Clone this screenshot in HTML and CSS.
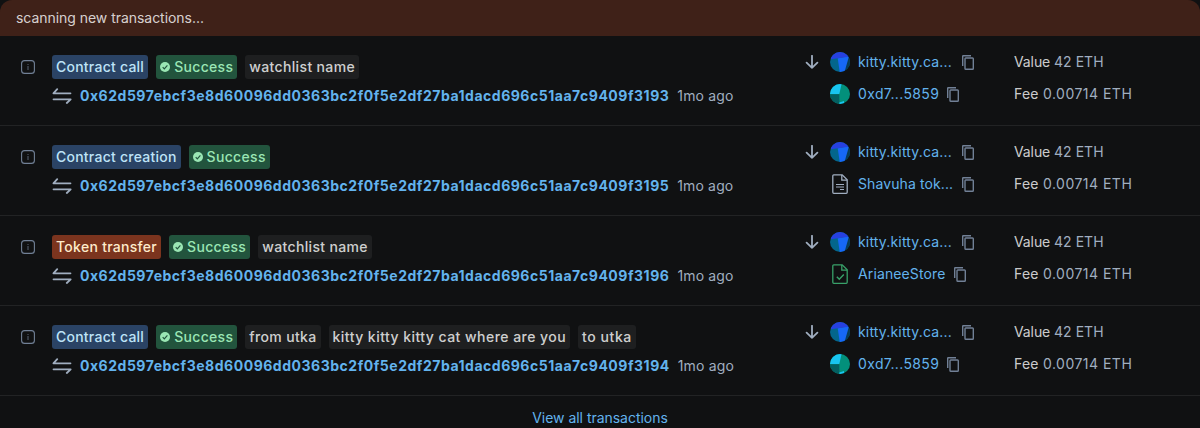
FILE: index.html
```
<!DOCTYPE html>
<html lang="en">
<head>
<meta charset="utf-8">
<title>Latest transactions</title>
<link rel="stylesheet" href="styles.css">
</head>
<body>
<svg class="sprite" aria-hidden="true">
  <symbol id="info" viewBox="0 0 14 14"><rect x=".6" y=".6" width="12.8" height="12.8" rx="3" fill="none" stroke="currentColor" stroke-width="1.1"/><path d="M6.5 4h1v1h-1zM6.5 6h1v4h-1z" fill="currentColor" opacity=".75"/></symbol>
  <symbol id="check" viewBox="0 0 10 10"><circle cx="5" cy="5" r="5" fill="currentColor"/><path d="M2.7 5.2 4.3 6.8 7.4 3.4" fill="none" stroke="#22543d" stroke-width="1.2"/></symbol>
  <symbol id="swap" viewBox="0 0 20 16"><path d="M18.5 5.3H1.4L5.2 1.2M1.5 11.3h17.2l-3.9 3.7" fill="none" stroke="currentColor" stroke-width="1.8" stroke-linecap="round" stroke-linejoin="round"/></symbol>
  <symbol id="down" viewBox="0 0 14 14"><path d="M7 .8v12M1.6 7.6 7 12.8l5.4-5.2" fill="none" stroke="currentColor" stroke-width="1.8" stroke-linecap="round" stroke-linejoin="round"/></symbol>
  <symbol id="copy" viewBox="0 0 12 15"><path d="M.7 11V1.3Q.7.7 1.3.7H9" fill="none" stroke="currentColor" stroke-width="1.4"/><rect x="3" y="3" width="8.3" height="11.2" rx=".8" fill="none" stroke="currentColor" stroke-width="1.4"/></symbol>
  <symbol id="kitty" viewBox="0 0 20 20"><path d="M0 0h20v20H0z" fill="#03668c"/><path d="M15 0h5v20h-7z" fill="#073c58"/><path d="M7.7 6.2 19 4.3 14.5 20H9.7z" fill="#1668f5"/><path d="M0 0h20v4.5L1 7.3z" fill="#2740e0"/></symbol>
  <symbol id="wallet" viewBox="0 0 20 20"><path d="M0 0h20v20H0z" fill="#03907b"/><path d="M0 0h11.6L9.3 10H0z" fill="#18c4f0"/><path d="M0 10.3h9.3l.1 9.7H0z" fill="#045f61"/><path d="M9.3 18.4 14 17v3H9.3z" fill="#18c4f0"/></symbol>
  <symbol id="doc" viewBox="0 0 16 20"><path d="M1.8.8h8.4l5 5v12.5q0 1-1 1H1.8q-1 0-1-1V1.8q0-1 1-1z" fill="none" stroke="currentColor" stroke-width="1.3"/><path d="M9.8 1v5.1H15" fill="none" stroke="currentColor" stroke-width="1.3"/><path d="M4 10.5h8M4 13h8M8 15.5h4" stroke="currentColor" stroke-width="1.2"/></symbol>
  <symbol id="verified" viewBox="0 0 16 20"><path d="M1.8.8h8.4l5 5v12.5q0 1-1 1H1.8q-1 0-1-1V1.8q0-1 1-1z" fill="none" stroke="currentColor" stroke-width="1.3"/><path d="M9.8 1v5.1H15" fill="none" stroke="currentColor" stroke-width="1.3"/><path d="m4.8 12.7 2.5 2.6 4.5-4.8" fill="none" stroke="currentColor" stroke-width="1.4"/></symbol>
</svg>
<main class="list">
  <div class="notice">scanning new transactions...</div>

  <section class="tx">
    <svg class="info"><use href="#info"/></svg>
    <div class="summary">
      <div class="tags"><span class="tag blue">Contract call</span><span class="tag green"><svg class="check"><use href="#check"/></svg>Success</span><span class="tag">watchlist name</span></div>
      <div class="hash-line"><svg class="swap"><use href="#swap"/></svg><a class="hash">0x62d597ebcf3e8d60096dd0363bc2f0f5e2df27ba1dacd696c51aa7c9409f3193</a><span class="time">1mo ago</span></div>
    </div>
    <svg class="down"><use href="#down"/></svg>
    <div class="parties">
      <div class="party"><svg class="avatar"><use href="#kitty"/></svg><a class="cut">kitty.kitty.ca...</a><svg class="copy"><use href="#copy"/></svg></div>
      <div class="party"><svg class="avatar"><use href="#wallet"/></svg><a class="address">0xd7...5859</a><svg class="copy"><use href="#copy"/></svg></div>
    </div>
    <div class="amounts"><div class="value">Value <span>42 ETH</span></div><div class="fee">Fee <span>0.00714 ETH</span></div></div>
  </section>

  <section class="tx">
    <svg class="info"><use href="#info"/></svg>
    <div class="summary">
      <div class="tags"><span class="tag blue">Contract creation</span><span class="tag green"><svg class="check"><use href="#check"/></svg>Success</span></div>
      <div class="hash-line"><svg class="swap"><use href="#swap"/></svg><a class="hash">0x62d597ebcf3e8d60096dd0363bc2f0f5e2df27ba1dacd696c51aa7c9409f3195</a><span class="time">1mo ago</span></div>
    </div>
    <svg class="down"><use href="#down"/></svg>
    <div class="parties">
      <div class="party"><svg class="avatar"><use href="#kitty"/></svg><a class="cut">kitty.kitty.ca...</a><svg class="copy"><use href="#copy"/></svg></div>
      <div class="party"><svg class="contract"><use href="#doc"/></svg><a class="cut token">Shavuha tok...</a><svg class="copy"><use href="#copy"/></svg></div>
    </div>
    <div class="amounts"><div class="value">Value <span>42 ETH</span></div><div class="fee">Fee <span>0.00714 ETH</span></div></div>
  </section>

  <section class="tx">
    <svg class="info"><use href="#info"/></svg>
    <div class="summary">
      <div class="tags"><span class="tag orange">Token transfer</span><span class="tag green"><svg class="check"><use href="#check"/></svg>Success</span><span class="tag">watchlist name</span></div>
      <div class="hash-line"><svg class="swap"><use href="#swap"/></svg><a class="hash">0x62d597ebcf3e8d60096dd0363bc2f0f5e2df27ba1dacd696c51aa7c9409f3196</a><span class="time">1mo ago</span></div>
    </div>
    <svg class="down"><use href="#down"/></svg>
    <div class="parties">
      <div class="party"><svg class="avatar"><use href="#kitty"/></svg><a class="cut">kitty.kitty.ca...</a><svg class="copy"><use href="#copy"/></svg></div>
      <div class="party"><svg class="contract ok"><use href="#verified"/></svg><a class="store">ArianeeStore</a><svg class="copy"><use href="#copy"/></svg></div>
    </div>
    <div class="amounts"><div class="value">Value <span>42 ETH</span></div><div class="fee">Fee <span>0.00714 ETH</span></div></div>
  </section>

  <section class="tx">
    <svg class="info"><use href="#info"/></svg>
    <div class="summary">
      <div class="tags"><span class="tag blue">Contract call</span><span class="tag green"><svg class="check"><use href="#check"/></svg>Success</span><span class="tag">from utka</span><span class="tag long">kitty kitty kitty cat where are you</span><span class="tag short">to utka</span></div>
      <div class="hash-line"><svg class="swap"><use href="#swap"/></svg><a class="hash">0x62d597ebcf3e8d60096dd0363bc2f0f5e2df27ba1dacd696c51aa7c9409f3194</a><span class="time">1mo ago</span></div>
    </div>
    <svg class="down"><use href="#down"/></svg>
    <div class="parties">
      <div class="party"><svg class="avatar"><use href="#kitty"/></svg><a class="cut">kitty.kitty.ca...</a><svg class="copy"><use href="#copy"/></svg></div>
      <div class="party"><svg class="avatar"><use href="#wallet"/></svg><a class="address">0xd7...5859</a><svg class="copy"><use href="#copy"/></svg></div>
    </div>
    <div class="amounts"><div class="value">Value <span>42 ETH</span></div><div class="fee">Fee <span>0.00714 ETH</span></div></div>
  </section>

  <a class="all">View all transactions</a>
</main>
</body>
</html>
```

FILE: styles.css
```
* { box-sizing: border-box; }
html { background: #101112; }
body {
  margin: 0;
  height: 428px;
  overflow: hidden;
  background: #101112;
  color: rgba(255, 255, 255, .8);
  font: 400 14px/20px Inter, sans-serif;
}
svg { display: block; flex: none; }
.sprite { width: 0; height: 0; position: absolute; }
a { color: #63b3ed; white-space: nowrap; }
.notice {
  height: 36px;
  padding: 8px 16px;
  border-radius: 12px 12px 0 0;
  background: #3f2118;
  letter-spacing: -.04px;
}
.tx {
  display: grid;
  grid-template-columns: 32px 754px 24px 184px 1fr;
  height: 90px;
  padding: 16px 0 0 20px;
  border-bottom: 1px solid rgba(255, 255, 255, .08);
}
.info { width: 14px; height: 14px; margin: 8px 0 0 1px; color: #718096; }
.tags { display: flex; gap: 8px; margin-top: 3px; }
.tag {
  display: flex;
  align-items: center;
  height: 24px;
  padding: 0 4px;
  border-radius: 3px;
  background: #1e1f20;
  font-weight: 500;
  letter-spacing: .35px;
  white-space: nowrap;
}
.blue { background: #2a4365; color: #bee3f8; letter-spacing: .24px; }
.green { background: #22543d; color: #9ae6b4; letter-spacing: .32px; }
.orange { background: #7b341e; color: #feebcb; letter-spacing: .29px; }
.long { letter-spacing: .46px; }
.short { letter-spacing: .57px; }
.check { width: 10px; height: 10px; margin-right: 4px; }
.hash-line { display: flex; align-items: center; height: 20px; margin-top: 7px; }
.swap { width: 20px; height: 16px; margin-right: 8px; color: #a0aec0; }
.hash { font-weight: 700; letter-spacing: .52px; }
.time { margin-left: 8px; color: #a0aec0; letter-spacing: .15px; }
.down { width: 14px; height: 14px; margin-top: 3px; margin-left: -1px; color: #a0aec0; }
.party { display: flex; align-items: center; height: 20px; margin-bottom: 12px; }
.avatar { width: 20px; height: 20px; margin-right: 8px; border-radius: 50%; }
.contract { width: 16px; height: 20px; margin: 0 10px 0 2px; color: #a0aec0; }
.ok { color: #38a169; }
.cut { width: 96px; letter-spacing: .17px; }
.token { letter-spacing: .1px; }
.address { width: 81px; letter-spacing: .37px; }
.store { width: 88px; letter-spacing: .12px; }
.copy { width: 12px; height: 15px; margin-left: 8px; color: #718096; }
.amounts { display: grid; grid-auto-rows: 20px; gap: 12px; align-content: start; }
.amounts span { color: #a0aec0; }
.value { letter-spacing: -.1px; }
.value span { letter-spacing: .05px; }
.fee { letter-spacing: .25px; }
.fee span { letter-spacing: .48px; }
.all { display: block; padding-top: 12px; text-align: center; letter-spacing: -.03px; }
```
